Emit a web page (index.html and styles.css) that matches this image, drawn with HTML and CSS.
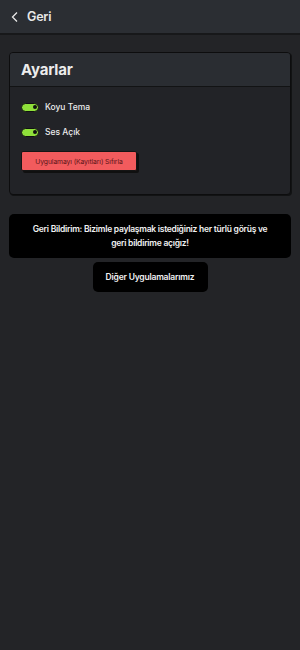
FILE: index.html
```html
<!DOCTYPE html>
<html lang="tr">
<head>
<meta charset="utf-8">
<link rel="stylesheet" href="styles.css">
</head>
<body>
<header class="topbar">
  <svg class="back" width="10" height="12" viewBox="0 0 10 12"><path d="M7 1.5 L2.5 6 L7 10.5" fill="none" stroke="#e8e8e8" stroke-width="1.3"/></svg>
  <span class="title">Geri</span>
</header>
<main class="content">
  <section class="card">
    <div class="card-head">Ayarlar</div>
    <div class="card-body">
      <div class="row"><span class="toggle"><span class="knob"></span></span><span>Koyu Tema</span></div>
      <div class="row"><span class="toggle"><span class="knob"></span></span><span>Ses Açık</span></div>
      <button class="reset">Uygulamayı (Kayıtları) Sıfırla</button>
    </div>
  </section>
  <div class="feedback">Geri Bildirim: Bizimle paylaşmak istediğiniz her türlü görüş ve geri bildirime açığız!</div>
  <div class="other-wrap"><div class="other">Diğer Uygulamalarımız</div></div>
</main>
</body>
</html>
```
FILE: styles.css
```css
* { box-sizing: border-box; }
html, body { margin: 0; padding: 0; }
body {
  background: #232427;
  font-family: "Inter", "Roboto", sans-serif;
  color: #ececec;
  width: 300px;
  height: 650px;
}
.topbar {
  height: 35px;
  background: #2b2e33;
  border-bottom: 2px solid #17181a;
  display: flex;
  align-items: center;
  padding-left: 10px;
  gap: 7px;
}
.back { display: block; }
.title { font-size: 12.5px; font-weight: 600; letter-spacing: -0.2px; color: #e8e8e8; }
.content { padding: 17px 9px 0 9px; }
.card {
  border: 1px solid #0d0d0e;
  border-radius: 4px;
  box-shadow: 1px 1px 0 #121314;
  overflow: hidden;
  background: #222327;
}
.card-head {
  height: 34px;
  background: #2a2d32;
  border-bottom: 1px solid #121314;
  font-size: 15px;
  font-weight: 700;
  display: flex;
  align-items: center;
  padding-left: 11px;
  letter-spacing: -0.2px;
}
.card-body { padding: 14px 11px 23px 11px; }
.row {
  display: flex;
  align-items: center;
  gap: 6px;
  font-size: 8.5px;
  font-weight: 500;
  height: 12px;
  margin-bottom: 13px;
}
.toggle {
  width: 18px;
  height: 9px;
  border-radius: 5px;
  background: #8fe03a;
  border: 1px solid #111;
  position: relative;
  display: inline-block;
}
.knob {
  position: absolute;
  right: 1px;
  top: 1.5px;
  width: 4px;
  height: 4px;
  border-radius: 50%;
  background: #111;
}
.reset {
  display: block;
  width: 116px;
  height: 20px;
  background: #f25b5d;
  border: 1px solid #151515;
  border-radius: 2px;
  box-shadow: 2px 2px 0 #101010;
  color: #5a1518;
  font-family: "Inter", "Roboto", sans-serif;
  font-size: 6.8px;
  letter-spacing: -0.1px;
  padding: 0;
}
.feedback {
  margin-top: 19px;
  background: #000;
  border-radius: 5px;
  height: 44px;
  display: flex;
  align-items: center;
  justify-content: center;
  text-align: center;
  font-size: 8.5px;
  font-weight: 600;
  line-height: 14px;
  letter-spacing: -0.25px;
  padding: 0 19px;
  color: #f2f2f2;
}
.other-wrap { display: flex; justify-content: center; margin-top: 4px; }
.other {
  background: #000;
  border-radius: 5px;
  width: 115px;
  height: 30px;
  display: flex;
  align-items: center;
  justify-content: center;
  font-size: 8.5px;
  font-weight: 600;
  letter-spacing: -0.2px;
  color: #f2f2f2;
}
```
